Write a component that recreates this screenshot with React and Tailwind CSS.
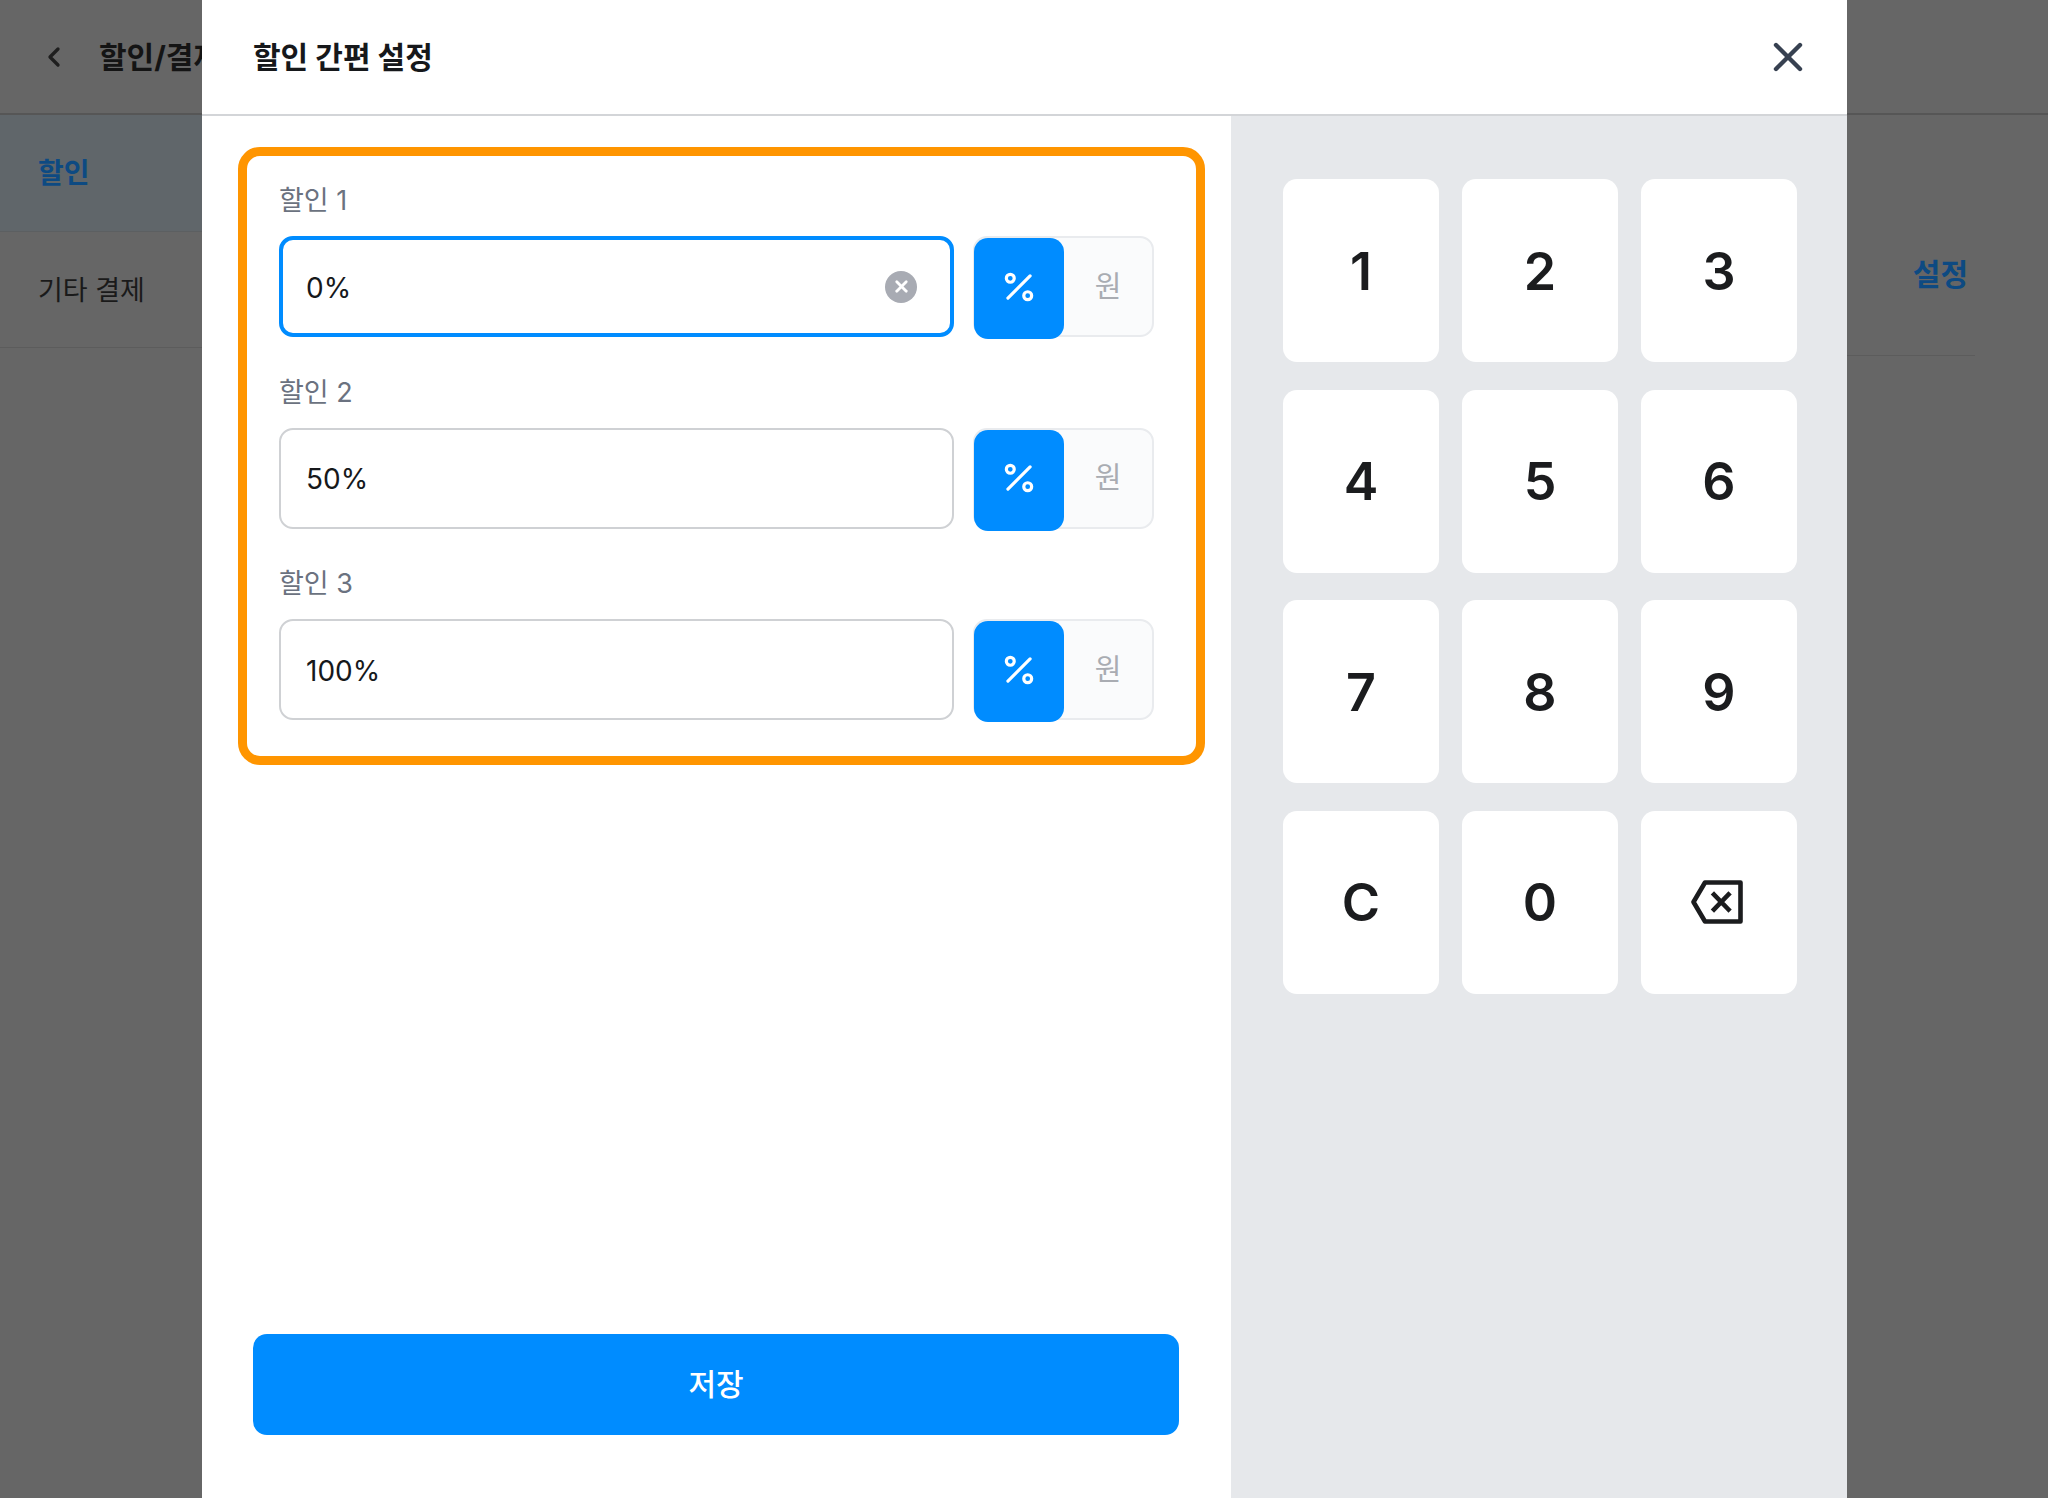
import React from "react";
import { Percent, X, ChevronLeft } from "lucide-react";

const fontStack = 'Inter, "Noto Sans CJK KR", sans-serif';

const discounts = [
  { label: "할인 1", value: "0%", focused: true },
  { label: "할인 2", value: "50%" },
  { label: "할인 3", value: "100%" },
];

const keys = ["1", "2", "3", "4", "5", "6", "7", "8", "9", "C", "0"];

const BackspaceIcon = () => (
  <svg width="52" height="44" viewBox="0 0 52 44" fill="none" stroke="#1b1c1e" strokeWidth="4.6" strokeLinejoin="round" strokeLinecap="square">
    <path d="M14 2.5H49.5V41.5H14L2.5 22Z" />
    <path d="M23 14.5L37.5 29.5M37.5 14.5L23 29.5" />
  </svg>
);

const DiscountRow = ({ label, value, focused }) => (
  <div className="flex flex-col gap-[20px]">
    <div className="h-[36px] pt-[3px] text-[27px] leading-[36px] text-[#6b7280]">{label}</div>
    <div className="flex h-[101px] gap-[19px]">
      <div
        className={
          focused
            ? "flex w-[675px] items-center justify-between rounded-[14px] border-[4px] border-[#008cff] bg-white pl-[23px] pr-[33px]"
            : "flex w-[675px] items-center justify-between rounded-[14px] border-2 border-[#cfd1d4] bg-white pl-[25px] pr-[35px]"
        }
      >
        <span className="pt-[2px] text-[28px] text-[#16181b]">{value}</span>
        {focused && (
          <span className="flex h-[32px] w-[32px] items-center justify-center rounded-full bg-[#a8abb3]">
            <X size={19} color="#ffffff" strokeWidth={3.5} />
          </span>
        )}
      </div>
      <div className="flex h-[101px] w-[181px] rounded-[14px] border-2 border-[#e9ebee] bg-[#fafbfc]">
        <div className="ml-[-1px] flex h-[101px] w-[90px] items-center justify-center rounded-[14px] bg-[#008cff] pb-[4px]">
          <Percent size={38} color="#ffffff" strokeWidth={2} />
        </div>
        <div className="flex flex-1 items-center justify-center text-[29px] text-[#a9acb2]">원</div>
      </div>
    </div>
  </div>
);

const App = () => {
  return (
    <div className="relative h-[1498px] w-[2048px] overflow-hidden bg-[#666666]" style={{ fontFamily: fontStack }}>
      {/* page behind the modal */}
      <div className="flex h-[115px] items-center gap-[29px] border-b-2 border-[#565656] pl-[38px]">
        <ChevronLeft size={32} color="#1e1e1e" strokeWidth={2.5} />
        <span className="pt-[1px] text-[30px] font-bold text-[#141414]">할인/결제</span>
      </div>
      <div className="flex">
        <div className="w-[400px]">
          <div className="flex h-[117px] items-center border-b border-[#5c5f61] bg-[#60666a] pl-[38px] text-[28px] font-semibold text-[#0d4a82]">
            할인
          </div>
          <div className="flex h-[116px] items-center border-b border-[#5c5c5c] pl-[38px] pt-[4px] text-[27px] text-[#1a1a1a]">
            기타 결제
          </div>
        </div>
        <div className="flex-1 pr-[73px] pt-[116px]">
          <div className="flex h-[125px] items-center justify-end border-b border-[#5c5c5c] pb-[38px] pr-[7px] text-[30px] font-semibold text-[#0d4a82]">
            설정
          </div>
        </div>
      </div>

      {/* modal */}
      <div className="absolute bottom-0 left-[202px] top-0 flex w-[1645px] flex-col bg-white">
        <div className="flex h-[116px] shrink-0 items-center justify-between border-b-2 border-[#d3d5d8] pb-[1px] pl-[51px] pr-[35px]">
          <h2 className="pt-[1px] text-[30px] font-bold text-[#16181b]">할인 간편 설정</h2>
          <X size={48} color="#374151" strokeWidth={2.2} />
        </div>
        <div className="flex flex-1">
          <div className="flex w-[1029px] flex-col">
            <div className="ml-[36px] mt-[31px] flex h-[618px] w-[967px] flex-col gap-[34.5px] rounded-[22px] border-[9px] border-[#ff9500] pl-[32px] pt-[24px]">
              {discounts.map((d) => (
                <DiscountRow key={d.label} {...d} />
              ))}
            </div>
            <button className="mb-[63px] ml-[51px] mt-auto h-[101px] w-[926px] rounded-[14px] bg-[#008cff] text-[30px] font-medium text-white">
              저장
            </button>
          </div>
          <div className="flex-1 bg-[#e6e8eb] pl-[52px] pr-[50px] pt-[63px]">
            <div className="grid grid-cols-3 gap-x-[23px] gap-y-[27.5px]">
              {keys.map((k) => (
                <button key={k} className="flex h-[183px] items-center justify-center rounded-[14px] bg-white pt-[2px] text-[52px] font-semibold text-[#1b1c1e]">
                  {k}
                </button>
              ))}
              <button className="flex h-[183px] items-center justify-center rounded-[14px] bg-white pb-[1px] pr-[5px]">
                <BackspaceIcon />
              </button>
            </div>
          </div>
        </div>
      </div>
    </div>
  );
};

export default App;
